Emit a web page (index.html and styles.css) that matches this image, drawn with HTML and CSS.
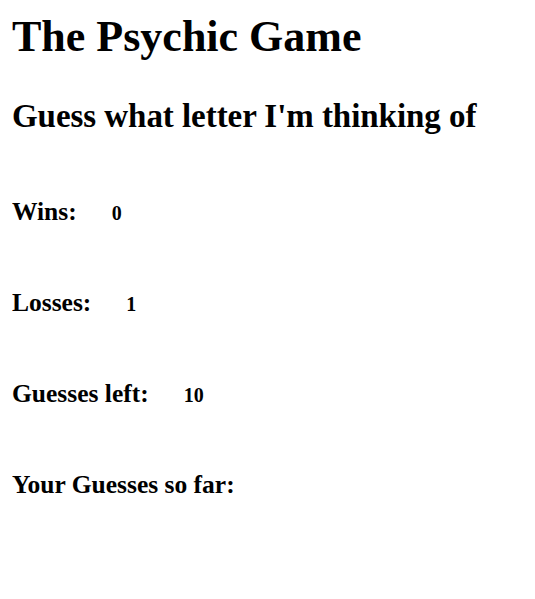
FILE: index.html
```html
<!DOCTYPE html>
<html>
<head>
<meta charset="utf-8">
<title>The Psychic Game</title>
<link rel="stylesheet" href="styles.css">
</head>
<body>
<h1 class="title">The Psychic Game</h1>
<h2 class="subtitle">Guess what letter I'm thinking of</h2>
<div class="stats">
  <p class="stat"><span class="label">Wins:</span><span class="value">0</span></p>
  <p class="stat"><span class="label">Losses:</span><span class="value">1</span></p>
  <p class="stat"><span class="label">Guesses left:</span><span class="value">10</span></p>
  <p class="stat"><span class="label">Your Guesses so far:</span><span class="value"></span></p>
</div>
</body>
</html>
```

FILE: styles.css
```css
body {
  margin: 8px 12px;
  font-family: "Liberation Serif", "Times New Roman", serif;
  color: #000;
  background: #fff;
}
.title {
  font-size: 44px;
  margin: 4px 0 0;
  line-height: 1.15;
}
.subtitle {
  font-size: 33px;
  letter-spacing: -0.05px;
  margin: 35px 0 0;
  line-height: 1.15;
}
.stats {
  margin-top: 61px;
}
.stat {
  display: flex;
  align-items: baseline;
  gap: 35px;
  margin: 0;
  height: 91px;
  font-weight: bold;
}
.label { font-size: 25.5px; }
.value { font-size: 20px; }
```
